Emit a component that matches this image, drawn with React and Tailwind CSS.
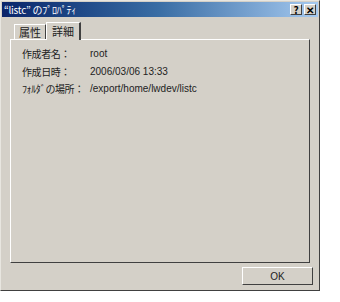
const font = { fontFamily: '"Noto Sans CJK JP", "Liberation Sans", sans-serif' };
const latin = { fontFamily: '"Liberation Sans", "Noto Sans CJK JP", sans-serif' };

function TitleButton({ children }) {
  return (
    <div className="w-[12px] h-[11px] bg-[#d4d0c8] border-t border-l border-white border-r border-b border-r-[#404040] border-b-[#404040] flex items-center justify-center text-[10px] font-bold leading-none text-black">
      {children}
    </div>
  );
}

export default function App() {
  const rows = [
    ['作成者名：', 'root'],
    ['作成日時：', '2006/03/06 13:33'],
    ['ﾌｫﾙﾀﾞの場所：', '/export/home/lwdev/listc'],
  ];

  return (
    <div className="w-[340px] h-[302px] bg-white" style={font}>
      <div className="w-[320px] h-[291px] bg-[#d4d0c8] border border-t-[#e8e6e0] border-l-[#e8e6e0] border-r-[#404040] border-b-[#404040] p-[1px] flex flex-col">
        <div className="h-[15px] flex items-center justify-between pl-[2px] pr-[2px] bg-gradient-to-r from-[#0a246a] via-[#3a6ea5] to-[#a6caf0]">
          <span className="text-white text-[10px] leading-none tracking-tight">“listc” のﾌﾟﾛﾊﾟﾃｨ</span>
          <div className="flex gap-[2px]">
            <TitleButton>?</TitleButton>
            <TitleButton>✕</TitleButton>
          </div>
        </div>

        <div className="flex flex-col px-[8px] pt-[4px]">
          <div className="flex items-end h-[18px] pl-[4px]">
            <div className="h-[15px] px-[4px] flex items-center text-[11px] text-[#222] border-t border-l border-white border-r border-r-[#404040]">
              属性
            </div>
            <div className="h-[18px] px-[5px] flex items-center text-[11px] text-[#222] border-t border-l border-white border-r-2 border-r-[#404040] -mb-[1px] bg-[#d4d0c8] relative z-10">
              詳細
            </div>
          </div>
          <div className="h-[224px] border border-t-white border-l-white border-r-[#404040] border-b-[#404040] pt-[5px] pl-[11px] flex flex-col">
            {rows.map(([k, v]) => (
              <div key={k} className="flex h-[17.5px] items-center text-[#222]">
                <span className="w-[68px] text-[10px] whitespace-nowrap tracking-[-0.4px]">{k}</span>
                <span className="text-[10px] whitespace-nowrap" style={latin}>{v}</span>
              </div>
            ))}
          </div>
        </div>

        <div className="flex justify-end pr-[5px] pt-[4px]">
          <button className="w-[71px] h-[18px] text-[10px] text-[#222] bg-[#d4d0c8] border border-t-white border-l-white border-r-[#404040] border-b-[#404040] flex items-center justify-center" style={latin}>
            OK
          </button>
        </div>
      </div>
    </div>
  );
}
